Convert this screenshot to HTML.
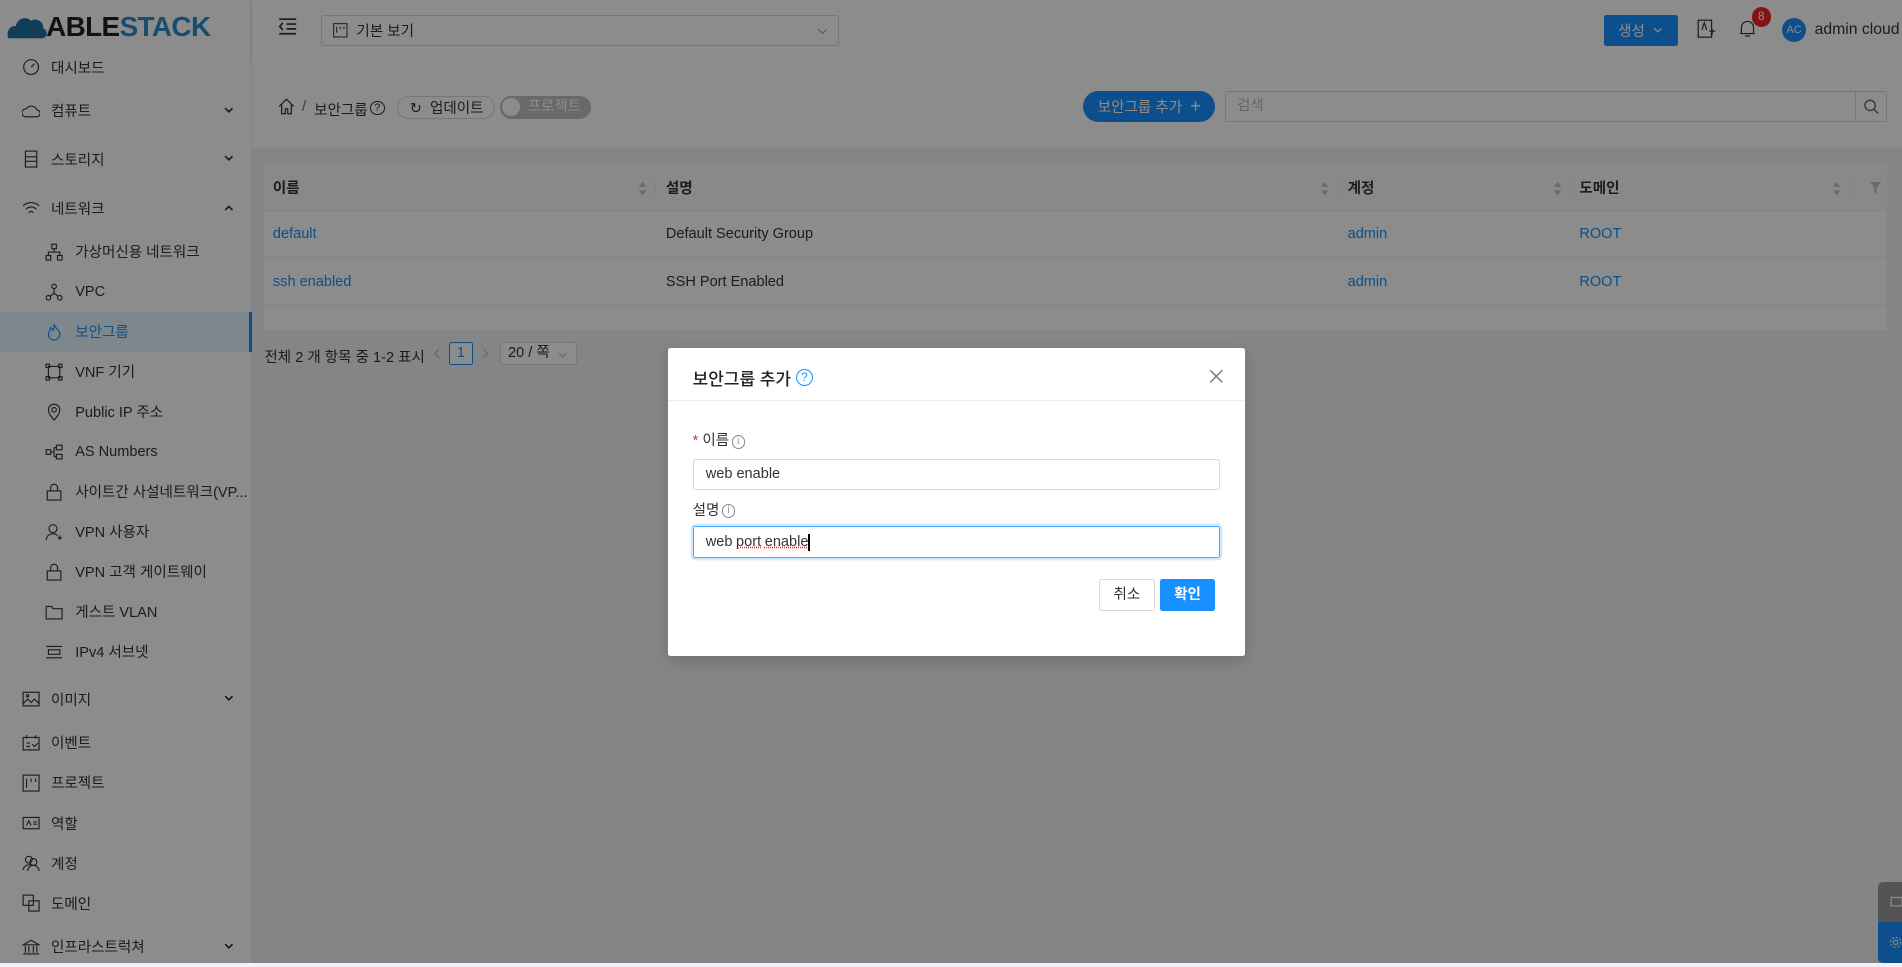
<!DOCTYPE html>
<html><head><meta charset="utf-8">
<style>
html{zoom:1.21301}
*{box-sizing:border-box;margin:0;padding:0}
body{width:1568px;height:794px;overflow:hidden;position:relative;background:#f0f2f5;font-family:"Liberation Sans","Noto Sans CJK KR",sans-serif;font-size:12px;color:#333}
.abs{position:absolute}
.side{left:0;top:0;width:208px;height:794px;background:#fff;border-right:1px solid #eee}
.mi{position:absolute;left:0;width:208px;height:33px;display:flex;align-items:center;color:#333;font-size:12px}
.mi svg{position:absolute;left:18px;width:15px;height:15px}
.mi.sub svg{left:37px}
.mi span{position:absolute;left:42px}
.mi.sub span{left:62px}
.mi .car{position:absolute;left:185px;top:13px;width:8px;height:6px}
.sel{background:#e6f7ff;color:#1890ff;border-right:3px solid #1890ff}
.head{left:208px;top:0;right:0;height:52px;background:#fff;box-shadow:0 1px 4px rgba(0,0,0,.1)}
.crumb{left:208px;top:52px;right:0;height:70px;background:#fff}
.card{left:218px;top:136px;width:1338px;height:136px;background:#fff}
.th{position:absolute;top:0;height:38px;background:#fafafa;border-bottom:1px solid #eee;width:100%}
.row{position:absolute;height:39px;width:100%;border-bottom:1px solid #eee}
.c{position:absolute;top:0;height:100%;display:flex;align-items:center;font-size:12px}
.srt{position:absolute;top:14px;width:6px;height:11px}
.lnk{color:#1890ff}
.ov{left:0;top:0;width:1568px;height:794px;background:rgba(0,0,0,.45)}
.dlg{left:551px;top:287px;width:475px;height:254px;background:#fff;border-radius:2px;box-shadow:0 4px 12px rgba(0,0,0,.15)}
.inp{position:absolute;left:20px;width:435px;height:26px;border:1px solid #d9d9d9;border-radius:2px;padding-left:10px;display:flex;align-items:center;font-size:12px;color:#333}
.ii{display:inline-block;width:11px;height:11px;border:1px solid #888;border-radius:6px;font-size:8px;text-align:center;line-height:10px;color:#888;vertical-align:1px;margin-left:2px}
</style></head><body>
<div class="abs side">
 <div class="abs" style="left:5px;top:9px;display:flex;align-items:center">
  <svg width="36" height="22" viewBox="0 0 40 24"><path d="M2 22 C0 15 4 10 9 11 C10 4 18 1 23 6 C28 3 35 7 34 13 C38 14 39 21 34 22 Z" fill="#1f6fa3"/></svg>
  <span style="font-size:23px;font-weight:bold;letter-spacing:-0.5px;color:#222;margin-left:-3px">ABLE</span><span style="font-size:23px;font-weight:bold;letter-spacing:-0.5px;color:#2b8ec6">STACK</span>
 </div>
 <div class="mi" style="top:39px"><svg viewBox="0 0 16 16" fill="none" stroke="#333"><circle cx="8" cy="8" r="6.5"/><path d="M8 8l3-3"/></svg><span>대시보드</span></div>
 <div class="mi" style="top:75px"><svg viewBox="0 0 16 16" fill="none" stroke="#333"><path d="M3 13h10a3 3 0 0 0 0-6 5 5 0 0 0-9-1 3.5 3.5 0 0 0-1 7z"/></svg><span>컴퓨트</span><svg class="car" viewBox="0 0 8 6" fill="none" stroke="#333" stroke-width="1.4"><path d="M1 1l3 3 3-3"/></svg></div>
 <div class="mi" style="top:115px"><svg viewBox="0 0 16 16" fill="none" stroke="#333"><rect x="3" y="1" width="10" height="14"/><path d="M3 6h10M3 10h10"/></svg><span>스토리지</span><svg class="car" viewBox="0 0 8 6" fill="none" stroke="#333" stroke-width="1.4"><path d="M1 1l3 3 3-3"/></svg></div>
 <div class="mi" style="top:155px"><svg viewBox="0 0 16 16" fill="none" stroke="#333"><path d="M1 6a10 10 0 0 1 14 0M3.5 9a6 6 0 0 1 9 0M6 12a2.5 2.5 0 0 1 4 0"/></svg><span>네트워크</span><svg class="car" viewBox="0 0 8 6" fill="none" stroke="#333" stroke-width="1.4"><path d="M1 5l3-3 3 3"/></svg></div>
 <div class="mi sub" style="top:191px"><svg viewBox="0 0 16 16" fill="none" stroke="#333"><rect x="6" y="1" width="4" height="4"/><rect x="1" y="11" width="4" height="4"/><rect x="11" y="11" width="4" height="4"/><path d="M8 5v3M3 11V8h10v3"/></svg><span>가상머신용 네트워크</span></div>
 <div class="mi sub" style="top:224px"><svg viewBox="0 0 16 16" fill="none" stroke="#333"><circle cx="8" cy="3" r="2"/><circle cx="3" cy="13" r="2"/><circle cx="13" cy="13" r="2"/><path d="M8 5v4L4 12M8 9l4 3"/></svg><span>VPC</span></div>
 <div class="mi sub sel" style="top:257px"><svg viewBox="0 0 16 16" fill="none" stroke="#1890ff"><path d="M8 1c1 4 5 5 5 9a5 5 0 0 1-10 0c0-3 2-4 2-6 1 1 2 2 2 3 1-2 1-4 1-6z"/></svg><span>보안그룹</span></div>
 <div class="mi sub" style="top:290px"><svg viewBox="0 0 16 16" fill="none" stroke="#333"><rect x="3" y="3" width="10" height="10"/><rect x="1" y="1" width="3" height="3"/><rect x="12" y="1" width="3" height="3"/><rect x="1" y="12" width="3" height="3"/><rect x="12" y="12" width="3" height="3"/></svg><span>VNF 기기</span></div>
 <div class="mi sub" style="top:323px"><svg viewBox="0 0 16 16" fill="none" stroke="#333"><path d="M8 15s5-5 5-9a5 5 0 0 0-10 0c0 4 5 9 5 9z"/><circle cx="8" cy="6" r="2"/></svg><span>Public IP 주소</span></div>
 <div class="mi sub" style="top:356px"><svg viewBox="0 0 16 16" fill="none" stroke="#333"><rect x="1" y="6" width="4" height="4"/><rect x="10" y="2" width="5" height="4"/><rect x="10" y="10" width="5" height="4"/><path d="M5 8h3M8 4v8M8 4h2M8 12h2"/></svg><span>AS Numbers</span></div>
 <div class="mi sub" style="top:389px"><svg viewBox="0 0 16 16" fill="none" stroke="#333"><rect x="2" y="7" width="12" height="8"/><path d="M5 7V4a3 3 0 0 1 6 0v3"/></svg><span>사이트간 사설네트워크(VP...</span></div>
 <div class="mi sub" style="top:422px"><svg viewBox="0 0 16 16" fill="none" stroke="#333"><circle cx="7" cy="5" r="3.5"/><path d="M1 15a6 6 0 0 1 10-4M11 13h4M13 11v4"/></svg><span>VPN 사용자</span></div>
 <div class="mi sub" style="top:455px"><svg viewBox="0 0 16 16" fill="none" stroke="#333"><rect x="2" y="7" width="12" height="8"/><path d="M5 7V4a3 3 0 0 1 6 0v3"/></svg><span>VPN 고객 게이트웨이</span></div>
 <div class="mi sub" style="top:488px"><svg viewBox="0 0 16 16" fill="none" stroke="#333"><path d="M1 3h5l1 2h8v9H1z"/></svg><span>게스트 VLAN</span></div>
 <div class="mi sub" style="top:521px"><svg viewBox="0 0 16 16" fill="none" stroke="#333"><path d="M1 3h14M1 13h14M3 6h10v4H3z"/></svg><span>IPv4 서브넷</span></div>
 <div class="mi" style="top:560px"><svg viewBox="0 0 16 16" fill="none" stroke="#333"><rect x="1" y="2" width="14" height="12"/><path d="M1 12l4-4 3 3 3-3 4 4"/><circle cx="5" cy="5" r="1"/></svg><span>이미지</span><svg class="car" viewBox="0 0 8 6" fill="none" stroke="#333" stroke-width="1.4"><path d="M1 1l3 3 3-3"/></svg></div>
 <div class="mi" style="top:596px"><svg viewBox="0 0 16 16" fill="none" stroke="#333"><rect x="1" y="3" width="14" height="11"/><path d="M4 1v3M12 1v3M4 8h3M4 11h3M9 9l2 2 3-3"/></svg><span>이벤트</span></div>
 <div class="mi" style="top:629px"><svg viewBox="0 0 16 16" fill="none" stroke="#333"><rect x="1" y="1" width="14" height="14"/><path d="M4 4v8M8 4v3M12 4v3"/></svg><span>프로젝트</span></div>
 <div class="mi" style="top:662px"><svg viewBox="0 0 16 16" fill="none" stroke="#333"><rect x="1" y="3" width="14" height="10"/><path d="M4 10l2-4 2 4M10 7h3M10 9h3"/></svg><span>역할</span></div>
 <div class="mi" style="top:695px"><svg viewBox="0 0 16 16" fill="none" stroke="#333"><circle cx="6" cy="5" r="3"/><circle cx="10" cy="7" r="3"/><path d="M1 14a5 5 0 0 1 7-4M5 15a5 5 0 0 1 10 0"/></svg><span>계정</span></div>
 <div class="mi" style="top:728px"><svg viewBox="0 0 16 16" fill="none" stroke="#333"><rect x="1" y="1" width="9" height="9"/><rect x="6" y="6" width="9" height="9"/></svg><span>도메인</span></div>
 <div class="mi" style="top:764px"><svg viewBox="0 0 16 16" fill="none" stroke="#333"><path d="M1 6l7-4 7 4zM3 7v6M6 7v6M10 7v6M13 7v6M1 14h14"/></svg><span>인프라스트럭쳐</span><svg class="car" viewBox="0 0 8 6" fill="none" stroke="#333" stroke-width="1.4"><path d="M1 1l3 3 3-3"/></svg></div>
</div>

<div class="abs head">
 <svg class="abs" style="left:21px;top:15px" width="16" height="14" viewBox="0 0 16 14" fill="none" stroke="#333" stroke-width="1.4"><path d="M1 1h14M7 5h8M7 9h8M1 13h14M4 4L1.5 7 4 10"/></svg>
 <div class="abs" style="left:57px;top:12px;width:427px;height:26px;border:1px solid #d9d9d9;border-radius:2px;display:flex;align-items:center;padding-left:9px;font-size:12px">
  <svg width="12" height="12" viewBox="0 0 12 12" fill="none" stroke="#555"><rect x=".5" y=".5" width="11" height="11"/><path d="M3 3v5M6 3v2M9 3v2"/></svg><span style="margin-left:7px">기본 보기</span><svg style="position:absolute;right:9px;top:10px" width="9" height="6" viewBox="0 0 9 6" fill="none" stroke="#aaa"><path d="M1 1l3.5 3.5L8 1"/></svg></div>
 <div class="abs" style="left:1114px;top:12px;width:61px;height:26px;background:#1890ff;border-radius:2px;color:#fff;display:flex;align-items:center;justify-content:center;font-size:12px">생성<svg style="margin-left:7px" width="8" height="5" viewBox="0 0 8 5" fill="none" stroke="#fff"><path d="M1 1l3 3 3-3"/></svg></div>
 <svg class="abs" style="left:1191px;top:16px" width="16" height="16" viewBox="0 0 16 16" fill="none" stroke="#333"><rect x="1" y="1" width="11" height="14"/><path d="M4 9l2-6 2 6M10 10h5M12.5 8v5"/></svg>
 <svg class="abs" style="left:1226px;top:16px" width="14" height="16" viewBox="0 0 14 16" fill="none" stroke="#333"><path d="M2 12V7a5 5 0 0 1 10 0v5h1H1zM5 14h4"/></svg>
 <div class="abs" style="left:1236px;top:6px;width:16px;height:16px;border-radius:8px;background:#f5222d;color:#fff;font-size:10px;text-align:center;line-height:16px">8</div>
 <div class="abs" style="left:1261px;top:15px;width:20px;height:20px;border-radius:10px;background:#1890ff;color:#fff;font-size:9px;text-align:center;line-height:20px">AC</div>
 <div class="abs" style="left:1288px;top:17px;font-size:13px">admin cloud</div>
</div>

<div class="abs crumb">
 <svg class="abs" style="left:21px;top:29px" width="14" height="14" viewBox="0 0 14 14" fill="none" stroke="#333"><path d="M1 7l6-6 6 6M3 5v8h3V9h2v4h3V5"/></svg>
 <div class="abs" style="left:41px;top:30px;color:#666">/</div>
 <div class="abs" style="left:51px;top:30px">보안그룹</div>
 <div class="abs" style="left:97px;top:31px;width:12px;height:12px;border:1px solid #333;border-radius:6px;font-size:9px;text-align:center;line-height:10px">?</div>
 <div class="abs" style="left:119px;top:27px;width:81px;height:19px;border:1px solid #d9d9d9;border-radius:10px;display:flex;align-items:center;padding-left:10px;font-size:12px">↻&nbsp; 업데이트</div>
 <div class="abs" style="left:204px;top:27px;width:75px;height:19px;background:#bfbfbf;border-radius:10px;color:#fff;font-size:12px;padding-left:23px;line-height:19px"><span class="abs" style="left:2px;top:2px;width:15px;height:15px;border-radius:8px;background:#fff"></span>프로젝트</div>
 <div class="abs" style="left:685px;top:23px;width:109px;height:26px;background:#1890ff;border-radius:13px;color:#fff;font-size:12px;display:flex;align-items:center;justify-content:center">보안그룹 추가 &nbsp;<span style="font-size:15px">+</span></div>
 <div class="abs" style="left:802px;top:23px;width:546px;height:26px;border:1px solid #d9d9d9;border-radius:2px;color:#bbb;padding-left:9px;line-height:24px">검색<svg class="abs" style="right:0;top:0;border-left:1px solid #d9d9d9;padding:5px 6px" width="26" height="24" viewBox="0 0 14 14" fill="none" stroke="#666" stroke-width="1.2"><circle cx="6" cy="6" r="4.5"/><path d="M9.5 9.5L13 13"/></svg></div>
</div>

<div class="abs card">
 <div class="th">
  <div class="c" style="left:7px;font-weight:bold">이름</div><svg class="srt" style="left:309px" viewBox="0 0 6 11" fill="#bfbfbf"><path d="M3 0l3 4H0zM0 7h6l-3 4z"/></svg>
  <div class="abs" style="left:322px;top:10px;width:1px;height:18px;background:#f0f0f0"></div>
  <div class="c" style="left:331px;font-weight:bold">설명</div><svg class="srt" style="left:871px" viewBox="0 0 6 11" fill="#bfbfbf"><path d="M3 0l3 4H0zM0 7h6l-3 4z"/></svg>
  <div class="abs" style="left:885px;top:10px;width:1px;height:18px;background:#f0f0f0"></div>
  <div class="c" style="left:893px;font-weight:bold">계정</div><svg class="srt" style="left:1063px" viewBox="0 0 6 11" fill="#bfbfbf"><path d="M3 0l3 4H0zM0 7h6l-3 4z"/></svg>
  <div class="abs" style="left:1076px;top:10px;width:1px;height:18px;background:#f0f0f0"></div>
  <div class="c" style="left:1084px;font-weight:bold">도메인</div><svg class="srt" style="left:1293px" viewBox="0 0 6 11" fill="#bfbfbf"><path d="M3 0l3 4H0zM0 7h6l-3 4z"/></svg>
  <div class="abs" style="left:1306px;top:10px;width:1px;height:18px;background:#f0f0f0"></div>
  <svg class="abs" style="left:1324px;top:14px" width="9" height="10" viewBox="0 0 9 10" fill="#bfbfbf"><path d="M0 0h9L5.5 4.5V10L3.5 8.5V4.5z"/></svg>
 </div>
 <div class="row" style="top:38px"><div class="c lnk" style="left:7px">default</div><div class="c" style="left:331px">Default Security Group</div><div class="c lnk" style="left:893px">admin</div><div class="c lnk" style="left:1084px">ROOT</div></div>
 <div class="row" style="top:77px"><div class="c lnk" style="left:7px">ssh enabled</div><div class="c" style="left:331px">SSH Port Enabled</div><div class="c lnk" style="left:893px">admin</div><div class="c lnk" style="left:1084px">ROOT</div></div>
</div>

<div class="abs" style="left:218px;top:285px">전체 2 개 항목 중 1-2 표시</div>
<svg class="abs" style="left:357px;top:287px" width="6" height="9" viewBox="0 0 6 9" fill="none" stroke="#bbb"><path d="M5 1L1.5 4.5 5 8"/></svg>
<div class="abs" style="left:370px;top:282px;width:20px;height:19px;border:1px solid #1890ff;border-radius:2px;color:#1890ff;text-align:center;line-height:17px;background:#fff">1</div>
<svg class="abs" style="left:397px;top:287px" width="6" height="9" viewBox="0 0 6 9" fill="none" stroke="#bbb"><path d="M1 1l3.5 3.5L1 8"/></svg>
<div class="abs" style="left:412px;top:282px;width:64px;height:19px;border:1px solid #d9d9d9;border-radius:2px;background:#fff;padding-left:6px;line-height:17px">20 / 쪽<svg style="position:absolute;right:7px;top:7px" width="8" height="5" viewBox="0 0 8 5" fill="none" stroke="#bbb"><path d="M1 1l3 3 3-3"/></svg></div>

<div class="abs" style="left:1548px;top:727px;width:20px;height:33px;background:#999;border-radius:4px 0 0 0"><svg class="abs" style="left:10px;top:11px" width="10" height="10" viewBox="0 0 10 10" fill="none" stroke="#fff"><rect x="1" y="2" width="9" height="7"/></svg></div>
<div class="abs" style="left:1548px;top:760px;width:20px;height:34px;background:#1890ff;border-radius:0 0 0 4px"><svg class="abs" style="left:9px;top:11px" width="11" height="12" viewBox="0 0 12 12" fill="none" stroke="#fff"><circle cx="6" cy="6" r="2"/><circle cx="6" cy="6" r="4.5" stroke-dasharray="2 1.5"/></svg></div>

<div class="abs ov"></div>

<div class="abs dlg">
 <div class="abs" style="left:0;top:0;width:475px;height:44px;border-bottom:1px solid #eee"></div>
 <div class="abs" style="left:20px;top:14px;font-size:14px;font-weight:500;color:#222;display:flex;align-items:center;white-space:nowrap">보안그룹 추가<span style="display:inline-block;margin-left:4px;width:14px;height:14px;border:1.3px solid #1890ff;border-radius:7px;color:#1890ff;font-size:10px;text-align:center;line-height:12px">?</span></div>
 <svg class="abs" style="left:446px;top:17px" width="12" height="12" viewBox="0 0 12 12" stroke="#777" stroke-width="1.2"><path d="M1 1l10 10M11 1L1 11"/></svg>
 <div class="abs" style="left:20px;top:67px;font-size:12px"><span style="color:#f5222d">*</span> 이름<span class="ii">i</span></div>
 <div class="inp" style="top:91px">web enable</div>
 <div class="abs" style="left:20px;top:124px;font-size:12px">설명<span class="ii">i</span></div>
 <div class="inp" style="top:147px;border-color:#40a9ff;box-shadow:0 0 0 2px rgba(24,144,255,.2)">web <span style="text-decoration:underline dotted #f5222d;margin:0 3px">port</span><span style="text-decoration:underline dotted #f5222d">enable</span><span style="display:inline-block;width:1px;height:14px;background:#000"></span></div>
 <div class="abs" style="left:355px;top:190px;width:46px;height:27px;border:1px solid #d9d9d9;border-radius:2px;text-align:center;line-height:25px">취소</div>
 <div class="abs" style="left:405px;top:190px;width:46px;height:27px;background:#1890ff;border-radius:2px;color:#fff;text-align:center;line-height:27px;font-weight:bold">확인</div>
</div>
</body></html>
